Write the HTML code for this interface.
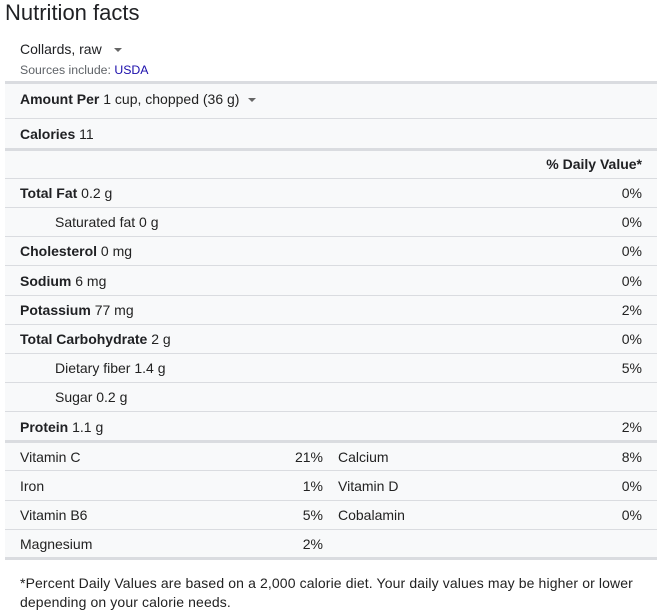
<!DOCTYPE html>
<html><head><meta charset="utf-8"><style>
body{margin:0;width:671px;height:616px;background:#fff;font-family:"Liberation Sans",Arial,sans-serif;color:#222;position:relative;overflow:hidden}
.a{position:absolute;white-space:nowrap}
.t{font-size:14px;line-height:16px}
.h{position:absolute;left:5px;width:652px}
.thin{height:1px;background:#dadce0}
.thick{height:3px;background:#dadce0}
b{font-weight:bold;color:#202124}
.r{text-align:right}
.arrow{display:inline-block;width:0;height:0;border-left:4px solid transparent;border-right:4px solid transparent;border-top:4px solid #666;vertical-align:middle;margin-left:9px}
</style></head><body>
<div class="a" style="left:5px;top:0px;font-size:22px;line-height:26px;color:#202124">Nutrition facts</div>
<div class="a t" style="left:20px;top:41px;color:#202124">Collards, raw<span class="arrow" style="margin-left:12px"></span></div>
<div class="a" style="left:20px;top:63px;font-size:12.3px;line-height:14px;color:#5f6368">Sources include: <span style="color:#1a0dab">USDA</span></div>
<div class="h" style="top:83px;height:475px;background:#f8f9fa"></div>
<div class="h thick" style="top:81px"></div>
<div class="a t" style="left:20px;top:91px"><b>Amount Per</b> 1 cup, chopped (36 g)<span class="arrow"></span></div>
<div class="h thin" style="top:118px"></div>
<div class="a t" style="left:20px;top:126px"><b>Calories</b> 11</div>
<div class="h thick" style="top:148px"></div>
<div class="a t" style="right:29px;top:156px"><b>% Daily Value*</b></div>
<div class="h thin" style="top:178px"></div>

<div class="a t" style="left:20px;top:185px"><b>Total Fat</b> 0.2 g</div><div class="a t" style="right:29px;top:185px">0%</div>
<div class="h thin" style="top:207px"></div>
<div class="a t" style="left:55px;top:214px">Saturated fat 0 g</div><div class="a t" style="right:29px;top:214px">0%</div>
<div class="h thin" style="top:236px"></div>
<div class="a t" style="left:20px;top:243px"><b>Cholesterol</b> 0 mg</div><div class="a t" style="right:29px;top:243px">0%</div>
<div class="h thin" style="top:265px"></div>
<div class="a t" style="left:20px;top:273px"><b>Sodium</b> 6 mg</div><div class="a t" style="right:29px;top:273px">0%</div>
<div class="h thin" style="top:295px"></div>
<div class="a t" style="left:20px;top:302px"><b>Potassium</b> 77 mg</div><div class="a t" style="right:29px;top:302px">2%</div>
<div class="h thin" style="top:324px"></div>
<div class="a t" style="left:20px;top:331px"><b>Total Carbohydrate</b> 2 g</div><div class="a t" style="right:29px;top:331px">0%</div>
<div class="h thin" style="top:353px"></div>
<div class="a t" style="left:55px;top:360px">Dietary fiber 1.4 g</div><div class="a t" style="right:29px;top:360px">5%</div>
<div class="h thin" style="top:382px"></div>
<div class="a t" style="left:55px;top:389px">Sugar 0.2 g</div>
<div class="h thin" style="top:411px"></div>
<div class="a t" style="left:20px;top:419px"><b>Protein</b> 1.1 g</div><div class="a t" style="right:29px;top:419px">2%</div>
<div class="h thick" style="top:440px"></div>

<div class="a t" style="left:20px;top:449px">Vitamin C</div><div class="a t" style="right:348px;top:449px">21%</div>
<div class="a t" style="left:338px;top:449px">Calcium</div><div class="a t" style="right:29px;top:449px">8%</div>
<div class="h thin" style="top:470px"></div>
<div class="a t" style="left:20px;top:478px">Iron</div><div class="a t" style="right:348px;top:478px">1%</div>
<div class="a t" style="left:338px;top:478px">Vitamin D</div><div class="a t" style="right:29px;top:478px">0%</div>
<div class="h thin" style="top:500px"></div>
<div class="a t" style="left:20px;top:507px">Vitamin B6</div><div class="a t" style="right:348px;top:507px">5%</div>
<div class="a t" style="left:338px;top:507px">Cobalamin</div><div class="a t" style="right:29px;top:507px">0%</div>
<div class="h thin" style="top:529px"></div>
<div class="a t" style="left:20px;top:536px">Magnesium</div><div class="a t" style="right:348px;top:536px">2%</div>
<div class="h thick" style="top:557px"></div>

<div class="a t" style="left:20px;top:574px;line-height:19px;color:#222;letter-spacing:0.12px">*Percent Daily Values are based on a 2,000 calorie diet. Your daily values may be higher or lower<br>depending on your calorie needs.</div>
</body></html>
